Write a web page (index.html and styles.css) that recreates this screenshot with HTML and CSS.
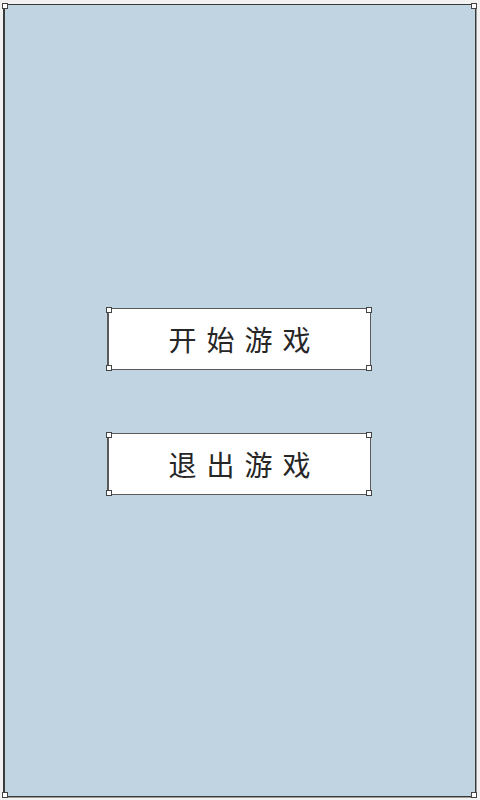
FILE: index.html
```html
<!DOCTYPE html>
<html lang="zh">
<head>
<meta charset="utf-8">
<link rel="stylesheet" href="styles.css">
</head>
<body>
<div class="frame">
  <span class="orn tl"></span><span class="orn tr"></span><span class="orn bl"></span><span class="orn br"></span>
  <div class="menu">
    <div class="btn">
      <span class="orn tl"></span><span class="orn tr"></span><span class="orn bl"></span><span class="orn br"></span>
      <span class="label">开始游戏</span>
    </div>
    <div class="btn">
      <span class="orn tl"></span><span class="orn tr"></span><span class="orn bl"></span><span class="orn br"></span>
      <span class="label">退出游戏</span>
    </div>
  </div>
</div>
</body>
</html>
```
FILE: styles.css
```css
html, body {
  margin: 0;
  padding: 0;
  background: #f2f2f2;
}
.frame {
  position: relative;
  box-sizing: border-box;
  margin: 4px 4px 3px 3px;
  height: 793px;
  background: #c1d4e1;
  border: 1px solid #3a3a3a;
  border-left-width: 2px;
  box-shadow: 1px 1px 0 #9a9a9a;
  display: flex;
  align-items: center;
  justify-content: center;
}
.menu {
  display: flex;
  flex-direction: column;
  gap: 63px;
  margin-right: 2px;
  margin-top: 2px;
}
.btn {
  position: relative;
  box-sizing: border-box;
  width: 264px;
  height: 62px;
  background: #ffffff;
  border: 1px solid #5a5a5a;
  border-left-width: 2px;
  display: flex;
  align-items: center;
  justify-content: center;
}
.label {
  font-family: "Noto Sans CJK SC", "Noto Sans", sans-serif;
  font-size: 28px;
  letter-spacing: 10px;
  margin-right: -10px;
  color: #262626;
  line-height: 1;
}
.orn {
  position: absolute;
  width: 4px;
  height: 4px;
  border: 1px solid #444;
  background: #fff;
}
.tl { top: -2px; left: -3px; }
.tr { top: -2px; right: -2px; }
.bl { bottom: -2px; left: -3px; }
.br { bottom: -2px; right: -2px; }
```
